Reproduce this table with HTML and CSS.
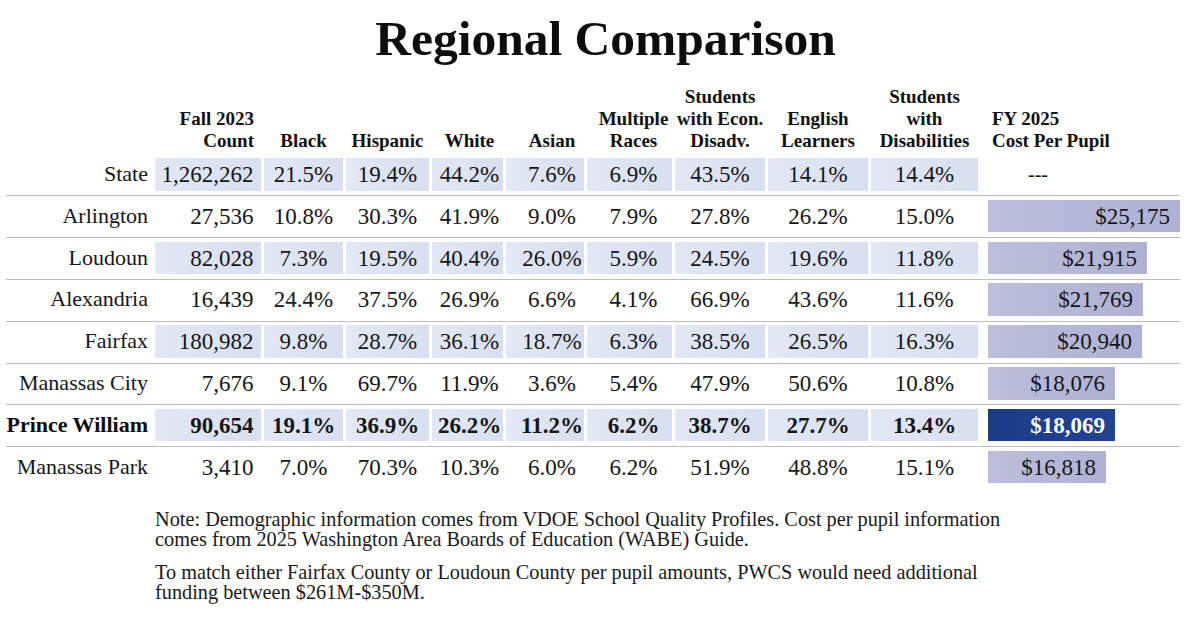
FILE: index.html
```html
<!DOCTYPE html>
<html lang="en">
<head>
<meta charset="utf-8">
<title>Regional Comparison</title>
<link rel="stylesheet" href="styles.css">
</head>
<body>
<h1 class="title">Regional Comparison</h1>
<div class="table">
  <div class="row head">
    <div class="lab"></div>
    <div class="h num">Fall 2023<br>Count</div>
    <div class="h">Black</div>
    <div class="h">Hispanic</div>
    <div class="h white">White</div>
    <div class="h asian">Asian</div>
    <div class="h multi">Multiple<br>Races</div>
    <div class="h">Students<br>with Econ.<br>Disadv.</div>
    <div class="h">English<br>Learners</div>
    <div class="h">Students<br>with<br>Disabilities</div>
    <div class="h costh">FY 2025<br>Cost Per Pupil</div>
  </div>

  <div class="row shade">
    <div class="lab">State</div>
    <div class="c num">1,262,262</div><div class="c">21.5%</div><div class="c">19.4%</div><div class="c white">44.2%</div><div class="c asian">7.6%</div><div class="c multi">6.9%</div><div class="c">43.5%</div><div class="c">14.1%</div><div class="c">14.4%</div>
    <div class="cost"><span class="dash">---</span></div>
  </div>

  <div class="row">
    <div class="lab">Arlington</div>
    <div class="c num">27,536</div><div class="c">10.8%</div><div class="c">30.3%</div><div class="c white">41.9%</div><div class="c asian">9.0%</div><div class="c multi">7.9%</div><div class="c">27.8%</div><div class="c">26.2%</div><div class="c">15.0%</div>
    <div class="cost"><div class="bar" style="width:192px">$25,175</div></div>
  </div>

  <div class="row shade">
    <div class="lab">Loudoun</div>
    <div class="c num">82,028</div><div class="c">7.3%</div><div class="c">19.5%</div><div class="c white">40.4%</div><div class="c asian">26.0%</div><div class="c multi">5.9%</div><div class="c">24.5%</div><div class="c">19.6%</div><div class="c">11.8%</div>
    <div class="cost"><div class="bar" style="width:159px">$21,915</div></div>
  </div>

  <div class="row">
    <div class="lab">Alexandria</div>
    <div class="c num">16,439</div><div class="c">24.4%</div><div class="c">37.5%</div><div class="c white">26.9%</div><div class="c asian">6.6%</div><div class="c multi">4.1%</div><div class="c">66.9%</div><div class="c">43.6%</div><div class="c">11.6%</div>
    <div class="cost"><div class="bar" style="width:155px">$21,769</div></div>
  </div>

  <div class="row shade">
    <div class="lab">Fairfax</div>
    <div class="c num">180,982</div><div class="c">9.8%</div><div class="c">28.7%</div><div class="c white">36.1%</div><div class="c asian">18.7%</div><div class="c multi">6.3%</div><div class="c">38.5%</div><div class="c">26.5%</div><div class="c">16.3%</div>
    <div class="cost"><div class="bar" style="width:154px">$20,940</div></div>
  </div>

  <div class="row">
    <div class="lab">Manassas City</div>
    <div class="c num">7,676</div><div class="c">9.1%</div><div class="c">69.7%</div><div class="c white">11.9%</div><div class="c asian">3.6%</div><div class="c multi">5.4%</div><div class="c">47.9%</div><div class="c">50.6%</div><div class="c">10.8%</div>
    <div class="cost"><div class="bar" style="width:127px">$18,076</div></div>
  </div>

  <div class="row shade bold">
    <div class="lab">Prince William</div>
    <div class="c num">90,654</div><div class="c">19.1%</div><div class="c">36.9%</div><div class="c white">26.2%</div><div class="c asian">11.2%</div><div class="c multi">6.2%</div><div class="c">38.7%</div><div class="c">27.7%</div><div class="c">13.4%</div>
    <div class="cost"><div class="bar dark" style="width:127px">$18,069</div></div>
  </div>

  <div class="row last">
    <div class="lab">Manassas Park</div>
    <div class="c num">3,410</div><div class="c">7.0%</div><div class="c">70.3%</div><div class="c white">10.3%</div><div class="c asian">6.0%</div><div class="c multi">6.2%</div><div class="c">51.9%</div><div class="c">48.8%</div><div class="c">15.1%</div>
    <div class="cost"><div class="bar" style="width:118px">$16,818</div></div>
  </div>
</div>

<div class="notes">
  <p>Note: Demographic information comes from VDOE School Quality Profiles. Cost per pupil information comes from 2025 Washington Area Boards of Education (WABE) Guide.</p>
  <p>To match either Fairfax County or Loudoun County per pupil amounts, PWCS would need additional funding between $261M-$350M.</p>
</div>
</body>
</html>
```

FILE: styles.css
```css
html, body {
  margin: 0;
  padding: 0;
  background: #ffffff;
}

body {
  width: 1200px;
  height: 630px;
  overflow: hidden;
  font-family: "Liberation Serif", "Times New Roman", serif;
  color: #161616;
}

.title {
  margin: 0;
  padding: 15px 0 0 11px;
  font-size: 49.5px;
  line-height: 47px;
  font-weight: bold;
  text-align: center;
  color: #0d0d0d;
}

.table {
  margin: 24px 0 0 6px;
  width: 1174px;
}

.row {
  display: grid;
  grid-template-columns: 146px 106px 79px 83px 71px 78px 85px 90px 100px 107px 199px;
  column-gap: 3px;
  padding: 3.5px 0 4.83px;
  border-bottom: 1px solid #bdbdbd;
  font-size: 23px;
}

.row.head {
  padding: 0 0 2.5px;
  border-bottom: none;
  align-items: end;
}

.row.last {
  border-bottom: none;
}

.h {
  font-size: 19px;
  line-height: 22px;
  font-weight: bold;
  text-align: center;
  color: #111;
  white-space: nowrap;
}

.h.num {
  text-align: right;
  padding-right: 7px;
}

.h.costh {
  text-align: left;
  padding-left: 11px;
}

.lab {
  font-size: 22px;
  line-height: 32.5px;
  text-align: right;
  padding-right: 4px;
  white-space: nowrap;
}

.c {
  height: 32.5px;
  line-height: 33px;
  text-align: center;
  white-space: nowrap;
}

.c.num {
  text-align: right;
  padding-right: 7.5px;
}

.white {
  padding-left: 4px;
}

.asian {
  padding-left: 14px;
}

.multi {
  padding-left: 8px;
}

.shade .c {
  background: linear-gradient(to right, #e2e8f4, #d8dff0);
}

.bold {
  font-weight: bold;
}

.bold .lab {
  color: #0d0d0d;
}

.cost {
  padding-left: 7px;
  height: 32.5px;
}

.dash {
  display: block;
  padding-left: 40px;
  line-height: 32px;
  font-size: 20px;
}

.bar {
  height: 32.5px;
  line-height: 33px;
  box-sizing: border-box;
  padding-right: 10px;
  text-align: right;
  background: linear-gradient(to right, #bcbedb, #afb1d3);
  white-space: nowrap;
}

.bar.dark {
  background: linear-gradient(to right, #1c3a8a, #224392);
  color: #ffffff;
}

.notes {
  margin: 21px 0 0 155px;
  width: 870px;
  font-size: 20.3px;
  line-height: 20px;
  color: #1a1a1a;
}

.notes p {
  margin: 0 0 13px;
}
```
